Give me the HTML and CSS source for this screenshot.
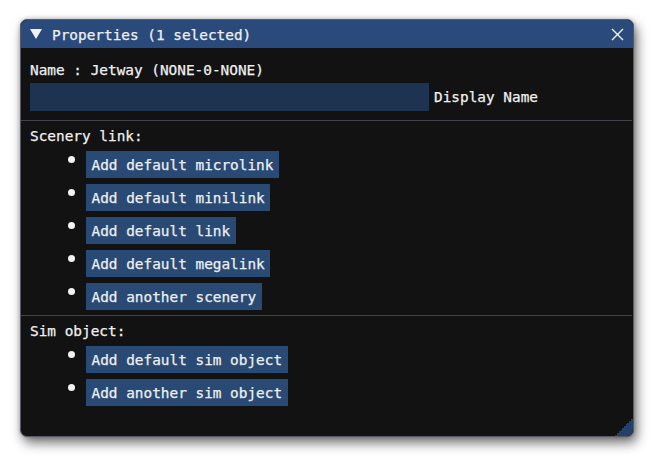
FILE: index.html
```html
<!DOCTYPE html>
<html>
<head>
<meta charset="utf-8">
<link rel="stylesheet" href="styles.css">
</head>
<body>
<div class="window">
  <div class="titlebar">
    <svg class="tri" width="12" height="10" viewBox="0 0 12 10"><polygon points="0,0 12,0 6,10" fill="#f2f2f2"/></svg>
    <span class="title">Properties (1 selected)</span>
    <svg class="close" width="13" height="13" viewBox="0 0 13 13"><path d="M1 1 L12 12 M12 1 L1 12" stroke="#f2f2f2" stroke-width="1.4" fill="none"/></svg>
  </div>
  <div class="content">
    <div class="line name">Name : Jetway (NONE-0-NONE)</div>
    <div class="inputrow">
      <div class="input"></div>
      <span class="label">Display Name</span>
    </div>
    <div class="sep"></div>
    <div class="line heading">Scenery link:</div>
    <ul class="list">
      <li><span class="btn">Add default microlink</span></li>
      <li><span class="btn">Add default minilink</span></li>
      <li><span class="btn">Add default link</span></li>
      <li><span class="btn">Add default megalink</span></li>
      <li><span class="btn">Add another scenery</span></li>
    </ul>
    <div class="sep"></div>
    <div class="line heading">Sim object:</div>
    <ul class="list">
      <li><span class="btn">Add default sim object</span></li>
      <li><span class="btn">Add another sim object</span></li>
    </ul>
  </div>
  <div class="grip"></div>
</div>
</body>
</html>
```
FILE: styles.css
```css
html, body {
  margin: 0;
  padding: 0;
  background: #ffffff;
}
body {
  padding: 19px 20px;
  font-family: "DejaVu Sans Mono", "Liberation Mono", monospace;
  font-size: 14.4px;
  color: #f0f0f0;
  -webkit-text-stroke: 0.25px #f0f0f0;
}
.window {
  position: relative;
  width: 612px;
  height: 416px;
  background: #121212;
  border: 1px solid #5a5a66;
  border-radius: 7px;
  overflow: hidden;
  box-shadow: 3px 6px 12px rgba(0,0,0,0.55), 0 0 4px rgba(0,0,0,0.25);
}
.titlebar {
  height: 28px;
  background: #294a7a;
  display: flex;
  align-items: center;
  padding: 0 9px 0 9px;
}
.tri { flex: none; margin-right: 10px; }
.title { flex: 1; line-height: 18px; margin-top: 1px; }
.close { flex: none; }
.content {
  padding: 13px 9px 0 9px;
}
.line {
  line-height: 18px;
  height: 18px;
}
.inputrow {
  display: flex;
  align-items: center;
  margin-top: 4px;
}
.input {
  width: 399px;
  height: 28px;
  background: #1e3352;
}
.label {
  margin-left: 5px;
  line-height: 18px;
}
.sep {
  height: 1px;
  background: #43434b;
  margin: 9px -8px 0 -9px;
}
.heading {
  margin-top: 6px;
}
.list {
  list-style: none;
  margin: 6px 0 0 0;
  padding: 0 0 0 38px;
  display: flex;
  flex-direction: column;
  gap: 6px;
}
.list li {
  display: flex;
  align-items: flex-start;
}
.list li::before {
  content: "";
  width: 7px;
  height: 7px;
  border-radius: 50%;
  background: #f2f2f2;
  margin-top: 5px;
  margin-right: 11px;
  flex: none;
}
.btn {
  display: inline-block;
  background: #284a75;
  padding: 4.5px 5.5px;
  line-height: 18px;
  white-space: pre;
}
.list + .sep {
  margin-top: 5px;
}
.grip {
  position: absolute;
  right: 0;
  bottom: 0;
  width: 18px;
  height: 18px;
  background: linear-gradient(135deg, transparent 50%, #22406a 50%);
}
```
